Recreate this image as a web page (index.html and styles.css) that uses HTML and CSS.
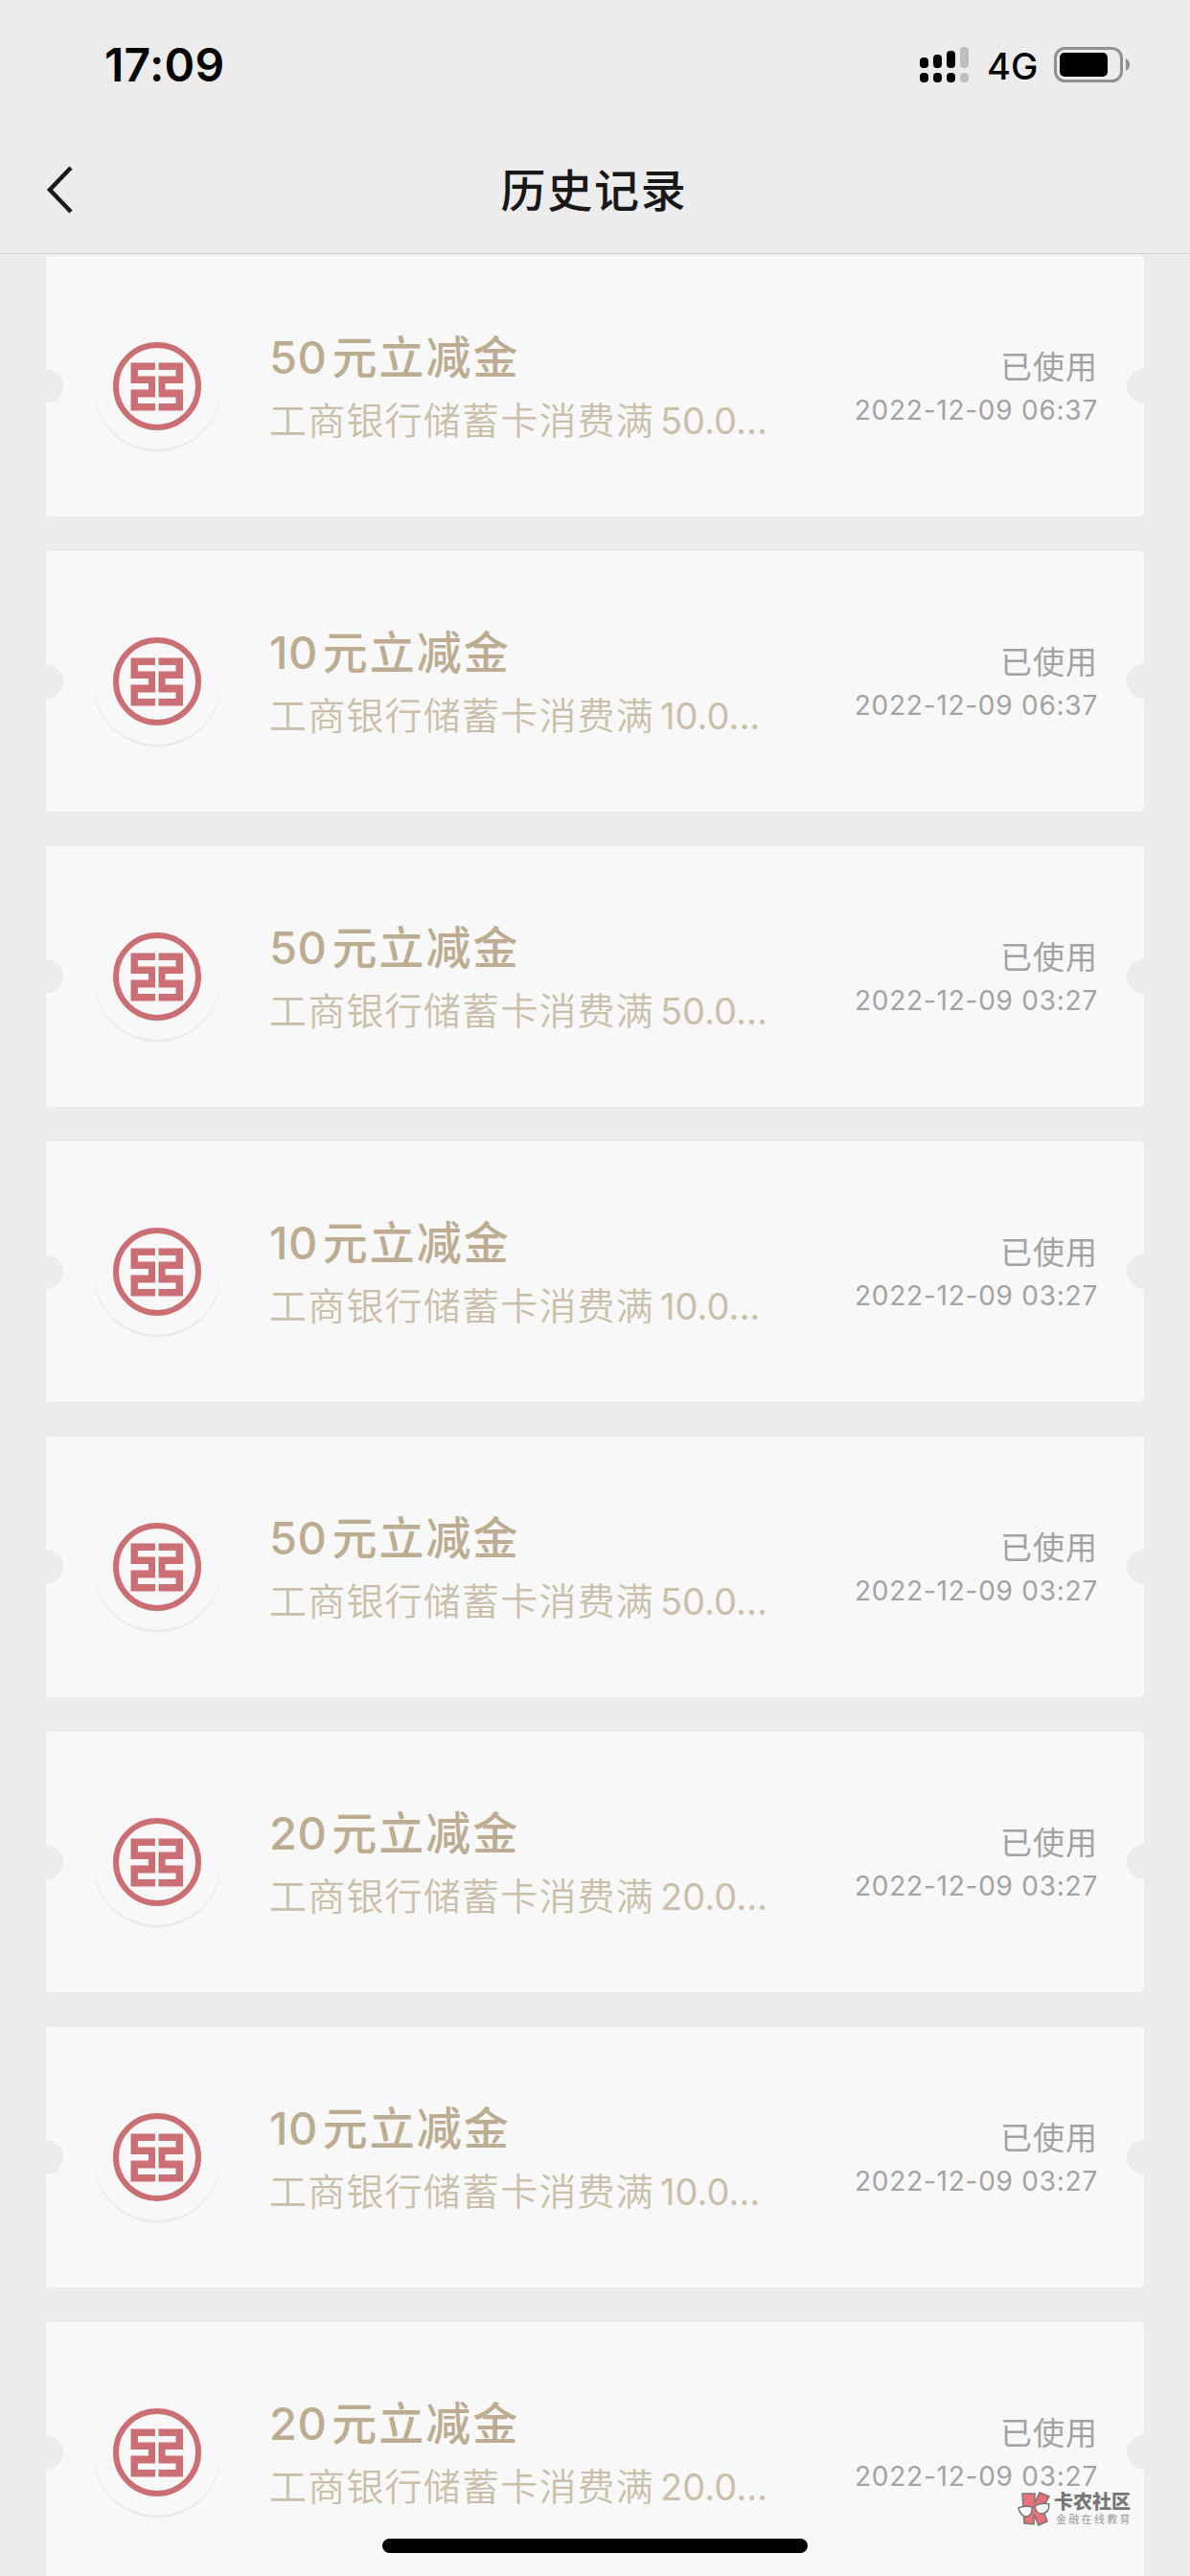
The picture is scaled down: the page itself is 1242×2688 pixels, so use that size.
FILE: index.html
```html
<!DOCTYPE html>
<html lang="zh-CN">
<head>
  <meta charset="UTF-8" />
  <meta name="viewport" content="width=device-width, initial-scale=1.0" />
  <title>历史记录</title>
  <link rel="stylesheet" href="styles.css">
</head>
<body>
  <header class="header">
    <div class="status-bar">
      <div class="time">17:09</div>
      <div class="status-icons">
        <svg class="signal" viewBox="0 0 52 38">
          <rect x="0" y="11" width="9" height="11" rx="4"/>
          <rect x="14" y="8" width="9" height="14" rx="4"/>
          <rect x="28" y="4" width="9" height="18" rx="4"/>
          <rect class="off" x="42" y="0" width="9" height="22" rx="4"/>
          <rect x="0" y="27" width="9" height="10" rx="4"/>
          <rect x="14" y="27" width="9" height="10" rx="4"/>
          <rect x="28" y="27" width="9" height="10" rx="4"/>
          <rect class="off" x="42" y="27" width="9" height="10" rx="4"/>
        </svg>
        <span class="network">4G</span>
        <svg class="battery" viewBox="0 0 80 38">
          <rect x="1.5" y="1.5" width="69" height="34" rx="10" fill="none" stroke="#919191" stroke-width="3"/>
          <rect x="6" y="6" width="50" height="25" rx="5"/>
          <path d="M75 12 Q79 14 79 18.5 Q79 23 75 25 Z" fill="#919191"/>
        </svg>
      </div>
    </div>
    <nav class="nav">
      <svg class="back" viewBox="0 0 28 50"><path d="M26 2 L4 25 L26 48"/></svg>
      <h1>历史记录</h1>
    </nav>
  </header>

  <main class="list" id="list"></main>

  <div class="watermark">
    <svg class="wm-logo" viewBox="0 0 34 36">
      <path class="k" d="M5 2 H18 L18 12 L23 1 L33 5 L26 17 L31 31 L22 35 L17 24 L17 34 L7 33 Z"/>
      <path class="glasses" d="M1 17 Q7 14 15 16 Q16 24 10 26 Q3 26 1 17 Z M18 15 Q25 11 33 13 Q33 22 26 23 Q19 23 18 15 Z M15 16 L18 15"/>
    </svg>
    <div class="wm-text">
      <div class="wm-name">卡农社区</div>
      <div class="wm-sub">金融在线教育</div>
    </div>
  </div>
  <div class="home-bar"></div>

  <template id="coupon">
    <section class="card">
      <div class="logo">
        <svg viewBox="0 0 92 92">
          <circle cx="46" cy="46" r="43" fill="none" stroke="#cb6f74" stroke-width="6"/>
          <path d="M18.500 21.500 H44 V29 H26 V35.500 H44 V57.500 H26 V64 H44 V71.500 H18.500 V49.500 H37 V43 H18.500 Z"/>
          <path d="M73 21.500 H47.500 V29 H65.500 V35.500 H47.500 V57.500 H65.500 V64 H47.500 V71.500 H73 V49.500 H54.500 V43 H73 Z"/>
        </svg>
      </div>
      <div class="info">
        <h2><span class="amount"></span>元立减金</h2>
        <p>工商银行储蓄卡消费满<span class="limit"></span></p>
      </div>
      <div class="state">
        <div class="used">已使用</div>
        <div class="date"></div>
      </div>
    </section>
  </template>

  <script>
    const records = [
      [50, '2022-12-09 06:37'],
      [10, '2022-12-09 06:37'],
      [50, '2022-12-09 03:27'],
      [10, '2022-12-09 03:27'],
      [50, '2022-12-09 03:27'],
      [20, '2022-12-09 03:27'],
      [10, '2022-12-09 03:27'],
      [20, '2022-12-09 03:27']
    ];
    const list = document.getElementById('list');
    const tpl  = document.getElementById('coupon');

    records.forEach(([amount, date]) => {
      const card = tpl.content.cloneNode(true);
      card.querySelector('.amount').textContent = amount;
      card.querySelector('.limit').textContent = `${amount}.0...`;
      card.querySelector('.date').textContent = date;
      list.appendChild(card);
    });
  </script>
</body>
</html>
```
FILE: styles.css
```css
:root {
  --bg: #ececec;
  --card-bg: #f8f8f8;
  --gold: #bcad92;
  --gold-light: #cabfaa;
  --muted: #a3a3a3;
  --red: #cb6f74;
}
* { box-sizing: border-box; margin: 0; padding: 0; }
body {
  background: var(--bg);
  font-family: Inter, "Noto Sans CJK SC", sans-serif;
  height: 2688px;
  overflow: hidden;
}
svg { display: block; }
.header {
  height: 265px;
  border-bottom: 1px solid #d3d3d3;
}
.status-bar {
  height: 132px;
  padding: 0 62px 0 109px;
  display: flex; justify-content: space-between;
}
.time {
  font-size: 48px; font-weight: 600;
  line-height: 136px; letter-spacing: 0.300px;
}
.status-icons { display: flex; padding-top: 49px; }
.signal { width: 52px; height: 38px; }
.signal .off { fill: #bfbfbf; }
.network {
  width: 88px; padding-left: 18px;
  font-size: 38px; font-weight: 500;
  line-height: 41px;
}
.battery { width: 80px; height: 38px; }
.nav {
  height: 132px;
  display: flex; align-items: center;
  padding: 0 48px;
}
.back { width: 28px; height: 50px; }
.back path { fill: none; stroke: #1a1a1a; stroke-width: 4.500; }
.nav h1 {
  flex: 1; padding: 0 30px 5px 0;
  text-align: center;
  font-size: 47px; font-weight: 500;
  letter-spacing: 1.700px;
  color: #181818;
}
.list {
  display: flex; flex-direction: column; gap: 36px;
  padding: 2px 48px 0;
}
.card {
  height: 272px; flex: none;
  display: flex; align-items: center;
  padding: 0 48px 0 50px;
  border-radius: 4px;
  /* ticket notches on both sides */
  background:
    radial-gradient(circle at 0 50%, var(--bg) 17.500px, transparent 18.500px),
    radial-gradient(circle at 100% 50%, var(--bg) 17.500px, transparent 18.500px),
    var(--card-bg);
}
.logo {
  width: 132px; height: 132px;
  display: flex; align-items: center; justify-content: center;
  border-radius: 50%;
  box-shadow: 0 2px 2px rgba(0,0,0,0.07);
}
.logo svg { width: 92px; height: 92px; fill: var(--red); }
.info { flex: 1; padding: 4px 0 0 51px; white-space: nowrap; }
.info h2 {
  font-size: 47px; font-weight: 500;
  line-height: 68px; letter-spacing: 2px;
  color: var(--gold);
}
.amount { margin-right: 5px; letter-spacing: 0.500px; }
.info p {
  font-size: 39px; font-weight: 350;
  line-height: 64px; letter-spacing: 1.200px;
  color: var(--gold-light);
}
.limit { font-size: 38px; font-weight: 400; margin-left: 6px; letter-spacing: 0; }
.state { padding-top: 3px; text-align: right; color: var(--muted); }
.used { font-size: 33px; line-height: 46px; letter-spacing: 1px; }
.date { font-size: 28px; line-height: 44px; letter-spacing: 0.750px; }
.watermark {
  position: absolute; left: 1062px; top: 2600px;
  display: flex; gap: 4px;
}
.wm-logo { width: 34px; height: 36px; }
.wm-logo .k { fill: #ea7079; stroke: #777; stroke-width: 1.500; }
.wm-logo .glasses { fill: #fafafa; stroke: #777; stroke-width: 1.500; }
.wm-name {
  font-size: 20px; font-weight: 900;
  line-height: 23px; color: #777;
}
.wm-sub {
  font-size: 11px; letter-spacing: 2.300px;
  line-height: 12px; padding-left: 2px; color: #999;
}
.home-bar {
  position: absolute; left: 399px; top: 2649px;
  width: 444px; height: 15px;
  border-radius: 8px; background: #000;
}
```
